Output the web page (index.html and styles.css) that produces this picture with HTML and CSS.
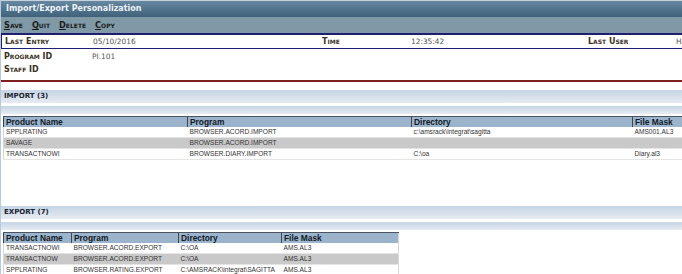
FILE: index.html
```html
<!DOCTYPE html>
<html>
<head>
<meta charset="utf-8">
<link rel="stylesheet" href="styles.css">
</head>
<body>
<div class="page">
  <div class="titlebar">Import/Export Personalization</div>
  <nav class="menubar">
    <span class="menu-item"><u>S</u>ave</span>
    <span class="menu-item"><u>Q</u>uit</span>
    <span class="menu-item"><u>D</u>elete</span>
    <span class="menu-item"><u>C</u>opy</span>
  </nav>
  <div class="entrybox">
    <span class="lbl">Last Entry</span><span class="val">05/10/2016</span>
    <span class="lbl">Time</span><span class="val">12:35:42</span>
    <span class="lbl">Last User</span><span class="val">HAS</span>
  </div>
  <div class="info">
    <span class="lbl">Program ID</span><span class="val">PI.101</span>
    <span class="lbl">Staff ID</span><span class="val"></span>
  </div>
  <div class="rule"></div>

  <section class="section import">
    <div class="band">IMPORT (3)</div>
    <div class="band thin"></div>
    <table class="grid grid-import">
      <colgroup><col class="c1"><col class="c2"><col class="c3"><col class="c4"></colgroup>
      <thead><tr><th>Product Name</th><th>Program</th><th>Directory</th><th>File Mask</th></tr></thead>
      <tbody>
        <tr><td>SPPLRATING</td><td>BROWSER.ACORD.IMPORT</td><td>c:\amsrack\integrat\sagitta</td><td>AMS001.AL3</td></tr>
        <tr class="alt"><td>SAVAGE</td><td>BROWSER.ACORD.IMPORT</td><td></td><td></td></tr>
        <tr><td>TRANSACTNOWI</td><td>BROWSER.DIARY.IMPORT</td><td>C:\oa</td><td>Diary.al3</td></tr>
      </tbody>
    </table>
  </section>

  <section class="section export">
    <div class="band">EXPORT (7)</div>
    <div class="band thin"></div>
    <table class="grid grid-export">
      <colgroup><col class="c1"><col class="c2"><col class="c3"><col class="c4"></colgroup>
      <thead><tr><th>Product Name</th><th>Program</th><th>Directory</th><th>File Mask</th></tr></thead>
      <tbody>
        <tr><td>TRANSACTNOWI</td><td>BROWSER.ACORD.EXPORT</td><td>C:\OA</td><td>AMS.AL3</td></tr>
        <tr class="alt"><td>TRANSACTNOW</td><td>BROWSER.ACORD.EXPORT</td><td>C:\OA</td><td>AMS.AL3</td></tr>
        <tr><td>SPPLRATING</td><td>BROWSER.RATING.EXPORT</td><td>C:\AMSRACK\integrat\SAGITTA</td><td>AMS.AL3</td></tr>
      </tbody>
    </table>
  </section>
</div>
</body>
</html>
```

FILE: styles.css
```css
html, body {
  margin: 0;
  padding: 0;
  overflow: hidden;
  background: #ffffff;
}

.page {
  width: 720px;
  font-family: "DejaVu Sans", Verdana, sans-serif;
  border-left: 1px solid #b9c9d8;
  min-height: 274px;
}

.titlebar {
  height: 16px;
  border-top: 1px solid #c8d2da;
  background: linear-gradient(#6688a0, #3f617a);
  color: #eef2f5;
  font-weight: bold;
  font-size: 8px;
  line-height: 16px;
  padding-left: 5px;
}

.menubar {
  height: 16px;
  background: #7f99a6;
  display: flex;
  align-items: center;
  gap: 9px;
  padding-left: 3px;
}

.menu-item {
  font-weight: bold;
  font-size: 8.2px;
  font-variant: small-caps;
  color: #1c1c1c;
}
.menu-item u { text-decoration-thickness: 1px; text-underline-offset: 1px; }

.entrybox {
  height: 13px;
  border-top: 2px solid #1f1f72;
  border-bottom: 1px solid #1f1f72;
  border-left: 1px solid #1f1f72;
  display: grid;
  grid-template-columns: 88px 229px 89px 177px 88px 1fr;
  align-items: center;
  padding-left: 3px;
}

.info {
  display: grid;
  grid-template-columns: 88px 1fr;
  grid-auto-rows: 13px;
  align-items: center;
  padding: 1px 0 0 3px;
}

.lbl {
  font-weight: bold;
  font-size: 8px;
  font-variant: small-caps;
  color: #3a3223;
}

.val {
  font-size: 7.4px;
  color: #555555;
}

.rule {
  margin-top: 4px;
  height: 2px;
  background: #7b1f1f;
}

.section.import { margin-top: 8px; }
.section.export { margin-top: 46px; }

.band {
  height: 13px;
  background: linear-gradient(#c5d5e5, #e6ebf0);
  font-weight: bold;
  font-size: 7px;
  line-height: 13px;
  color: #1c2330;
  padding-left: 3px;
}
.band.thin {
  height: 8px;
  margin-top: 3px;
}

.grid {
  border-collapse: collapse;
  table-layout: fixed;
  margin: 2px 0 0 2px;
  font-family: "Liberation Sans", Arial, sans-serif;
}

.grid-import { width: 718px; }
.grid-import .c1 { width: 184px; }
.grid-import .c2 { width: 224px; }
.grid-import .c3 { width: 221px; }

.grid-export { width: 396px; border-right: 1px solid #d8d8d8; }
.grid-export .c1 { width: 68px; }
.grid-export .c2 { width: 107px; }
.grid-export .c3 { width: 103px; }

.grid th {
  height: 10px;
  padding: 0 0 0 2px;
  background: #9bb4cc;
  border-top: 1px solid #4a5462;
  border-left: 1px solid #3e4550;
  text-align: left;
  font-weight: bold;
  font-size: 8.4px;
  line-height: 10px;
  color: #111a26;
  white-space: nowrap;
  overflow: hidden;
}

.grid td {
  height: 10px;
  padding: 0 0 0 2px;
  border-bottom: 1px solid #e4e4e4;
  font-size: 6.6px;
  line-height: 10px;
  color: #333333;
  white-space: nowrap;
  overflow: hidden;
}
.grid td:first-child { border-left: 1px solid #d6d6d6; }

.grid tr.alt td { background: #c9c9c9; }
```
